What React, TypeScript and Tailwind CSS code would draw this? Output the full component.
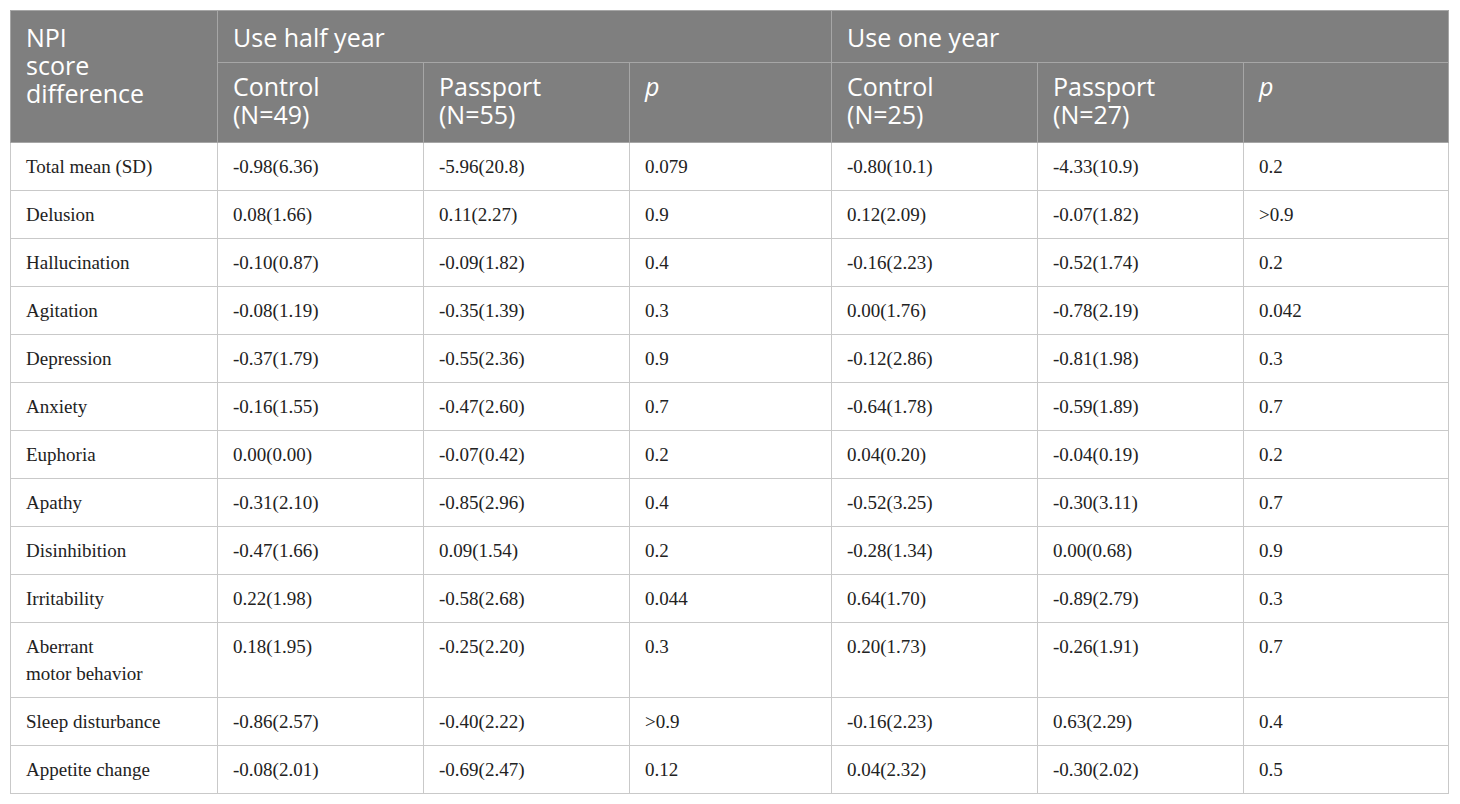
const rows: [string, string[]][] = [
    ["Total mean (SD)", ["-0.98(6.36)", "-5.96(20.8)", "0.079", "-0.80(10.1)", "-4.33(10.9)", "0.2"]],
    ["Delusion", ["0.08(1.66)", "0.11(2.27)", "0.9", "0.12(2.09)", "-0.07(1.82)", ">0.9"]],
    ["Hallucination", ["-0.10(0.87)", "-0.09(1.82)", "0.4", "-0.16(2.23)", "-0.52(1.74)", "0.2"]],
    ["Agitation", ["-0.08(1.19)", "-0.35(1.39)", "0.3", "0.00(1.76)", "-0.78(2.19)", "0.042"]],
    ["Depression", ["-0.37(1.79)", "-0.55(2.36)", "0.9", "-0.12(2.86)", "-0.81(1.98)", "0.3"]],
    ["Anxiety", ["-0.16(1.55)", "-0.47(2.60)", "0.7", "-0.64(1.78)", "-0.59(1.89)", "0.7"]],
    ["Euphoria", ["0.00(0.00)", "-0.07(0.42)", "0.2", "0.04(0.20)", "-0.04(0.19)", "0.2"]],
    ["Apathy", ["-0.31(2.10)", "-0.85(2.96)", "0.4", "-0.52(3.25)", "-0.30(3.11)", "0.7"]],
    ["Disinhibition", ["-0.47(1.66)", "0.09(1.54)", "0.2", "-0.28(1.34)", "0.00(0.68)", "0.9"]],
    ["Irritability", ["0.22(1.98)", "-0.58(2.68)", "0.044", "0.64(1.70)", "-0.89(2.79)", "0.3"]],
    ["Aberrant\nmotor behavior", ["0.18(1.95)", "-0.25(2.20)", "0.3", "0.20(1.73)", "-0.26(1.91)", "0.7"]],
    ["Sleep disturbance", ["-0.86(2.57)", "-0.40(2.22)", ">0.9", "-0.16(2.23)", "0.63(2.29)", "0.4"]],
    ["Appetite change", ["-0.08(2.01)", "-0.69(2.47)", "0.12", "0.04(2.32)", "-0.30(2.02)", "0.5"]],
];

const widths = [207, 206, 206, 202, 206, 206, 205];

const th = "border border-[#a6a6a6] px-[15px] text-left align-top font-normal leading-[28px]";
const th1 = th + " pt-[12px] pb-[11px]";
const th2 = th + " pt-[9px] pb-[14px]";
const td = "border border-[#c9c9c9] px-[15px] py-[10px] align-top leading-[27px]";

export default function App() {
    return (
        <div className="min-h-screen bg-white p-[10px]">
            <table className="table-fixed border-collapse border border-[#c9c9c9] w-[1439px]">
                <colgroup>
                    {widths.map((w, i) => (
                        <col key={i} style={{ width: w }} />
                    ))}
                </colgroup>
                <thead className="bg-[#7f7f7f] text-white text-[25px] font-['Open_Sans',sans-serif]">
                    <tr>
                        <th rowSpan={2} className={th1}>
                            NPI
                            <br />
                            score
                            <br />
                            difference
                        </th>
                        <th colSpan={3} className={th1}>Use half year</th>
                        <th colSpan={3} className={th1}>Use one year</th>
                    </tr>
                    <tr>
                        <th className={th2}>Control<br />(N=49)</th>
                        <th className={th2}>Passport<br />(N=55)</th>
                        <th className={th2}><i>p</i></th>
                        <th className={th2}>Control<br />(N=25)</th>
                        <th className={th2}>Passport<br />(N=27)</th>
                        <th className={th2}><i>p</i></th>
                    </tr>
                </thead>
                <tbody className="text-[19px] text-[#222] font-['Liberation_Serif',serif]">
                    {rows.map(([label, vals]) => (
                        <tr key={label}>
                            <td className={td + " whitespace-pre-line"}>{label}</td>
                            {vals.map((v, i) => (
                                <td key={i} className={td}>{v}</td>
                            ))}
                        </tr>
                    ))}
                </tbody>
            </table>
        </div>
    );
}
